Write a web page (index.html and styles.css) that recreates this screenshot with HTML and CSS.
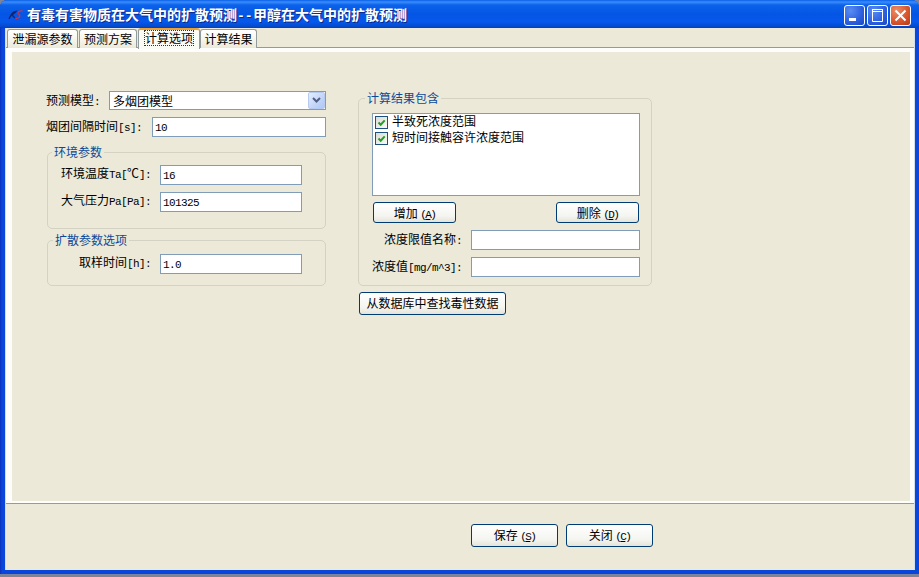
FILE: index.html
```html
<!DOCTYPE html>
<html lang="zh">
<head>
<meta charset="utf-8">
<title>有毒有害物质在大气中的扩散预测</title>
<link rel="stylesheet" href="styles.css">
</head>
<body>
<div class="window">
  <header class="titlebar">
    <svg class="appicon" width="16" height="12" viewBox="0 0 16 12"><path d="M1 10C3 6 4 3 8 2.500 6 4.500 5 5 4 6L7 9" fill="none" stroke="#12246e" stroke-width="1.300"/><path d="M14.500 2C10 1.500 9 4 11 5.500S11 9.500 7.500 9.500" fill="none" stroke="#c8324a" stroke-width="1.300"/></svg>
    <h1 class="title">有毒有害物质在大气中的扩散预测<span class="dash">--</span>甲醇在大气中的扩散预测</h1>
    <div class="winbtns">
      <div class="winbtn"><svg width="21" height="21" viewBox="0 0 21 21"><rect x="5" y="13" width="7" height="3" fill="#fff"/></svg></div>
      <div class="winbtn"><svg width="21" height="21" viewBox="0 0 21 21"><path d="M5 4.500h11M5 6.500h11M5.500 5v11.500h10V5" fill="none" stroke="#fff" stroke-width="1"/></svg></div>
      <div class="winbtn close"><svg width="21" height="21" viewBox="0 0 21 21"><path d="M5.500 5.500l10 10M15.500 5.500l-10 10" stroke="#fff" stroke-width="2" fill="none"/></svg></div>
    </div>
  </header>
  <main class="client">
    <nav class="tabs">
      <div class="tab t1">泄漏源参数</div>
      <div class="tab t2">预测方案</div>
      <div class="tab t3 active"><span class="focus">计算选项</span></div>
      <div class="tab t4">计算结果</div>
    </nav>
    <section class="panel">
      <div class="col-left">
        <div class="row r-model">
          <span class="label l-model">预测模型<span class="lat">:</span></span>
          <div class="select">
            <span class="select-text">多烟团模型</span>
            <span class="arrow"><svg width="9" height="7" viewBox="0 0 9 7"><path d="M1 1l3.500 3.500L8 1" fill="none" stroke="#4d6185" stroke-width="2"/></svg></span>
          </div>
        </div>
        <div class="row r-interval">
          <span class="label l-interval">烟团间隔时间<span class="lat">[s]:</span></span>
          <div class="field fill"><span class="lat">10</span></div>
        </div>
        <fieldset class="group g-env">
          <legend>环境参数</legend>
          <div class="row r-field">
            <span class="label l-right">环境温度<span class="lat">Ta[</span>℃<span class="lat">]:</span></span>
            <div class="field f-left"><span class="lat">16</span></div>
          </div>
          <div class="row r-field">
            <span class="label l-right">大气压力<span class="lat">Pa[Pa]:</span></span>
            <div class="field f-left"><span class="lat">101325</span></div>
          </div>
        </fieldset>
        <fieldset class="group g-diff">
          <legend>扩散参数选项</legend>
          <div class="row r-field">
            <span class="label l-right">取样时间<span class="lat">[h]:</span></span>
            <div class="field f-left"><span class="lat">1.0</span></div>
          </div>
        </fieldset>
      </div>
      <div class="col-right">
        <fieldset class="group g-result">
          <legend>计算结果包含</legend>
          <div class="listbox">
            <div class="item"><span class="check"><svg width="11" height="11" viewBox="0 0 11 11"><path d="M2.500 5.500l2.200 2.200 4-4.400" fill="none" stroke="#22a024" stroke-width="2"/></svg></span>半致死浓度范围</div>
            <div class="item"><span class="check"><svg width="11" height="11" viewBox="0 0 11 11"><path d="M2.500 5.500l2.200 2.200 4-4.400" fill="none" stroke="#22a024" stroke-width="2"/></svg></span>短时间接触容许浓度范围</div>
          </div>
          <div class="btnrow">
            <button class="btn b-small">增加 <span class="lat mn">(<u>A</u>)</span></button>
            <button class="btn b-small">删除 <span class="lat mn">(<u>D</u>)</span></button>
          </div>
          <div class="row r-limit">
            <span class="label l-limit">浓度限值名称<span class="lat">:</span></span>
            <div class="field f-limit"></div>
          </div>
          <div class="row r-limit">
            <span class="label l-limit">浓度值<span class="lat">[mg/m^3]:</span></span>
            <div class="field f-limit"></div>
          </div>
        </fieldset>
        <button class="btn b-find">从数据库中查找毒性数据</button>
      </div>
    </section>
    <footer class="foot">
      <button class="btn b-foot">保存 <span class="lat mn">(<u>S</u>)</span></button>
      <button class="btn b-foot">关闭 <span class="lat mn">(<u>C</u>)</span></button>
    </footer>
  </main>
</div>
</body>
</html>
```

FILE: styles.css
```css
* { box-sizing: border-box; }
html, body { margin: 0; padding: 0; }
body {
  width: 919px;
  height: 577px;
  overflow: hidden;
  background: #7d8499;
  font-family: "Noto Sans CJK SC", "Liberation Sans", sans-serif;
  font-size: 12px;
  color: #000;
}
.lat { font-family: "Liberation Mono", monospace; font-size: 11px; letter-spacing: -.6px; }
.mn { letter-spacing: -1.6px; }

.window {
  width: 919px;
  height: 574px;
  display: flex;
  flex-direction: column;
  padding: 0 4px 4px 5px;
  background: linear-gradient(90deg, #0a30b8 0, #0a46dc 2px, #0a46dc 100%);
  border-radius: 7px 7px 0 0;
  overflow: hidden;
}
.titlebar {
  flex: none;
  height: 28px;
  margin: 0 -4px 0 -5px;
  padding: 0 8px 0 8px;
  display: flex;
  align-items: center;
  background: linear-gradient(180deg, #0a5fe8 0, #3a8dfb 2px, #0a62ea 5px, #0555e4 14px, #0658ec 22px, #0548c8 27px, #0a3ca8 28px);
}
.appicon { flex: none; margin-top: 2px; }
.title {
  margin: 3px 0 0 3px;
  font-size: 14px;
  font-weight: 700;
  line-height: 16px;
  color: #fff;
  text-shadow: 1px 1px 0 #0a2a8c;
  white-space: nowrap;
}
.dash { display: inline-block; width: 16px; font-family: "Liberation Mono", monospace; font-size: 13px; letter-spacing: 0; }
.winbtns { margin-left: auto; display: flex; gap: 2px; margin-top: 3px; }
.winbtn {
  width: 21px;
  height: 21px;
  border: 1px solid #fff;
  border-radius: 3px;
  background: radial-gradient(circle at 30% 25%, #5a8cf2 0, #2f62e0 55%, #1c46c4 100%);
  overflow: hidden;
}
.winbtn svg { display: block; margin: -1px; }
.winbtn.close { background: radial-gradient(circle at 30% 25%, #ec8e6a 0, #d9582e 55%, #b8371a 100%); }

.client {
  flex: 1;
  min-height: 0;
  display: flex;
  flex-direction: column;
  background: #ece9d8;
  border-left: 1px solid #cfdff2;
  border-right: 1px solid #cfdff2;
}
.tabs { flex: none; height: 20px; display: flex; padding-left: 1px; align-items: flex-end; position: relative; z-index: 1; }
.tab {
  height: 19px;
  margin-right: 1px;
  border: 1px solid #919b9c;
  border-bottom: none;
  border-radius: 3px 3px 0 0;
  background: linear-gradient(180deg, #fff 0, #f5f4ea 60%, #ece9d8 100%);
  text-align: center;
  line-height: 18px;
  white-space: nowrap;
}
.t1 { width: 71px; }
.t2 { width: 58px; }
.t3 { width: 62px; height: 21px; margin-right: 0; margin-bottom: -1px; border-top: 2px solid #f0a030; background: #fbfbf6; line-height: 16px; }
.t4 { width: 57px; }
.focus { display: inline-block; padding: 0 1px; height: 16px; line-height: 15px; outline: 1px dotted #333; outline-offset: -1px; }

.panel {
  flex: 1;
  min-height: 0;
  display: flex;
  gap: 32px;
  padding: 39px 0 0 34px;
  background: #ece9d8;
  border: solid #fdfdfb;
  border-width: 4px 4px 2px 6px;
  box-shadow: 0 -1px 0 #919b9c, 0 1px 0 #9a9a90;
}
.col-left { flex: none; width: 280px; }
.col-right { flex: none; width: 294px; }

.row { display: flex; align-items: center; }
.label { flex: none; white-space: nowrap; line-height: 14px; }
.r-model { height: 19px; margin-bottom: 7px; }
.l-model { width: 63px; }
.r-interval { height: 20px; }
.l-interval { width: 106px; }

.select {
  flex: 1;
  height: 19px;
  display: flex;
  align-items: center;
  justify-content: space-between;
  padding: 0 0 0 3px;
  border: 1px solid #7f9db9;
  background: #fff;
}
.arrow {
  width: 17px;
  height: 17px;
  display: flex;
  align-items: center;
  justify-content: center;
  border: 1px solid #b6cbf2;
  border-radius: 2px;
  background: linear-gradient(135deg, #e6eefc 0, #c3d4f8 60%, #aec8f6 100%);
}
.field {
  height: 20px;
  padding: 0 2px;
  border: 1px solid #7f9db9;
  background: #fff;
  line-height: 15px;
}
.fill { flex: 1; }
.f-left { width: 142px; }
.f-limit { width: 169px; }

.group {
  margin: 0;
  padding: 0;
  border: 1px solid #d3d2c3;
  border-radius: 5px;
  min-width: 0;
}
.group legend {
  padding: 0 2px;
  color: #0b4a98;
  line-height: 14px;
  font-size: 12px;
}
.g-env { margin: 8px 0 0 1px; height: 84px; padding-top: 6px; }
.g-env legend { margin-left: 4px; }
.g-diff { margin: 4px 0 0 1px; height: 53px; padding-top: 7px; }
.g-diff legend { margin-left: 5px; }
.r-field { height: 20px; margin-bottom: 7px; padding-right: 23px; justify-content: flex-end; }
.l-right { margin: 0 9px 2px 0; }

.g-result { height: 195px; padding: 8px 11px 0 13px; }
.g-result legend { margin-left: -7px; }
.listbox {
  height: 83px;
  padding: 0 2px;
  background: #fff;
  border: 1px solid #7f9db9;
  line-height: 14px;
}
.item { height: 16px; display: flex; align-items: flex-start; line-height: 13px; white-space: nowrap; }
.check {
  flex: none;
  width: 13px;
  height: 13px;
  margin: 2px 4px 0 0;
  border: 1px solid #1c5180;
  background: linear-gradient(135deg, #dcdcd7 0, #f8f8f5 100%);
}
.check svg { display: block; margin: 0; }

.btn {
  height: 23px;
  padding: 0 0 2px;
  font: inherit;
  color: #000;
  border: 1px solid #003c74;
  border-radius: 3px;
  background: linear-gradient(180deg, #fff 0, #f4f4f0 70%, #e6e4d8 100%);
  white-space: nowrap;
  cursor: default;
}
.btnrow { display: flex; justify-content: space-between; width: 266px; margin: 6px 0 7px 1px; }
.b-small { width: 83px; height: 21px; padding: 0; }
.r-limit { height: 20px; margin-bottom: 7px; justify-content: flex-end; }
.l-limit { text-align: right; margin: 0 9px 0 0; }
.b-find { display: block; width: 147px; margin: 6px 0 0 1px; }

.foot { flex: none; height: 67px; padding: 21px 0 0 465px; display: flex; gap: 8px; align-items: flex-start; }
.b-foot { width: 87px; }
```
